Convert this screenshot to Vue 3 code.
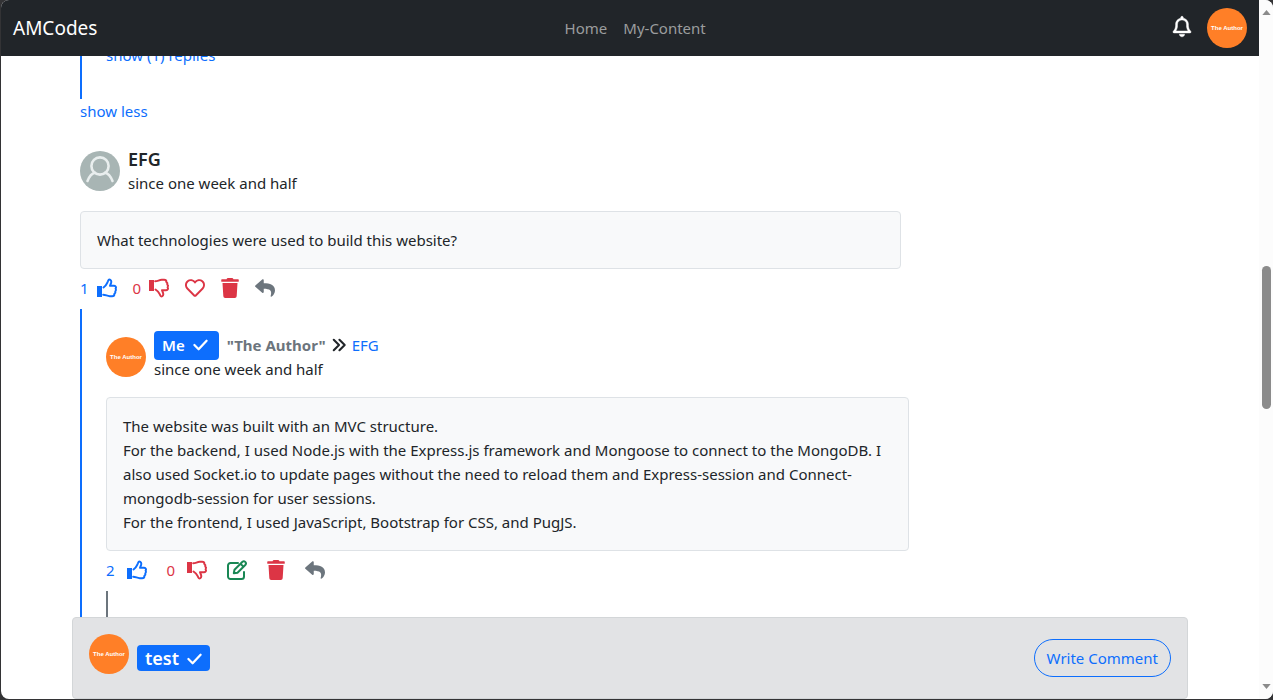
<script setup>
const icons = {
  trash: { box: '0 0 448 512', d: 'M432 32H312l-9.4-18.7A24 24 0 0 0 281.1 0H166.8a23.72 23.72 0 0 0-21.4 13.3L136 32H16A16 16 0 0 0 0 48v32a16 16 0 0 0 16 16h416a16 16 0 0 0 16-16V48a16 16 0 0 0-16-16zM53.2 467a48 48 0 0 0 47.9 45h245.8a48 48 0 0 0 47.9-45L416 128H32z' },
  reply: { box: '0 0 512 512', d: 'M8.309 189.836L184.313 37.851C199.719 24.546 224 35.347 224 56.015v80.053c160.629 1.839 288 34.032 288 186.258 0 61.441-39.581 122.309-83.333 154.132-13.653 9.931-33.111-2.533-28.077-18.631 45.344-145.012-21.507-183.51-176.59-185.742V360c0 20.7-24.3 31.453-39.687 18.164l-176.004-152c-11.071-9.562-11.086-26.753 0-36.328z' },
  heart: { box: '0 0 512 512', d: 'M458.4 64.3C400.6 15.7 311.3 23 256 79.3 200.7 23 111.4 15.6 53.6 64.3-21.6 127.6-10.6 230.8 43 285.5l175.4 178.7c10 10.2 23.4 15.9 37.6 15.9 14.3 0 27.6-5.6 37.6-15.8L469 285.6c53.5-54.7 64.7-157.9-10.6-221.3zm-23.6 187.5L259.4 430.5c-2.4 2.4-4.4 2.4-6.8 0L77.2 251.8c-36.5-37.2-43.9-107.6 7.3-150.7 38.9-32.7 98.9-27.8 136.5 10.5l35 35.7 35-35.7c37.8-38.5 97.8-43.2 136.5-10.6 51.1 43.1 43.5 113.9 7.3 150.8z' },
}

const comments = [
  {
    id: 1,
    text: ['What technologies were used to build this website?'],
    likes: 1,
    dislikes: 0,
    tools: [
      { name: 'heart', label: 'Love', tone: 'red' },
      { name: 'trash', label: 'Delete', tone: 'red' },
      { name: 'reply', label: 'Reply', tone: 'gray' },
    ],
  },
  {
    id: 2,
    mine: true,
    text: [
      'The website was built with an MVC structure.',
      'For the backend, I used Node.js with the Express.js framework and Mongoose to connect to the MongoDB. I also used Socket.io to update pages without the need to reload them and Express-session and Connect-mongodb-session for user sessions.',
      'For the frontend, I used JavaScript, Bootstrap for CSS, and PugJS.',
    ],
    likes: 2,
    dislikes: 0,
    tools: [
      { name: 'edit', label: 'Edit', tone: 'green' },
      { name: 'trash', label: 'Delete', tone: 'red' },
      { name: 'reply', label: 'Reply', tone: 'gray' },
    ],
  },
]
</script>

<template>
  <div class="window">
    <div class="page">
      <nav class="navbar">
        <a class="brand" href="#">AMCodes</a>
        <div class="links">
          <a href="#">Home</a>
          <a href="#">My-Content</a>
        </div>
        <div class="account">
          <button class="bell" aria-label="Notifications">
            <svg viewBox="0 0 448 512"><path d="M224 0c-17.7 0-32 14.3-32 32V49.9C119.5 61.4 64 124.2 64 200v33.4c0 45.4-15.5 89.5-43.8 124.9L5.3 377c-5.8 7.2-6.9 17.1-2.9 25.4S14.8 416 24 416H424c9.2 0 17.6-5.3 21.6-13.6s2.9-18.2-2.9-25.4l-14.9-18.6C399.5 322.9 384 278.8 384 233.4V200c0-75.8-55.5-138.6-128-150.1V32c0-17.7-14.3-32-32-32zm0 96h8c57.4 0 104 46.6 104 104v33.4c0 47.9 13.9 94.6 39.7 134.6H72.3C98.1 328 112 281.3 112 233.4V200c0-57.4 46.6-104 104-104h8zm64 352H224 160c0 17 6.7 33.3 18.7 45.3s28.3 18.7 45.3 18.7s33.3-6.7 45.3-18.7s18.7-28.3 18.7-45.3z" /></svg>
          </button>
          <button class="avatar" aria-label="Account menu">The Author</button>
        </div>
      </nav>

      <main class="feed">
        <div class="column">
          <div class="thread earlier">
            <a href="#">show (1) replies</a>
          </div>
          <a class="less" href="#">show less</a>

          <template v-for="c in comments" :key="c.id">
            <article class="comment" :class="{ nested: c.mine }">
              <header class="author">
                <span v-if="c.mine" class="avatar">The Author</span>
                <svg v-else class="person" viewBox="0 0 40 40">
                  <circle cx="20" cy="20" r="20" fill="#a8b5b4" />
                  <g fill="none" stroke="#e9eeee" stroke-width="2.6" stroke-linecap="round">
                    <circle cx="20" cy="15" r="8.6" />
                    <path d="M7.500 30C9.500 25 12 22.500 15 21.800M25 21.800C28 22.500 30.500 25 32.500 30" />
                  </g>
                </svg>
                <div>
                  <div v-if="c.mine" class="who">
                    <span class="badge">Me
                      <svg viewBox="0 0 16 16"><path class="tick" d="M1.500 8.500 6 13 14.500 4" /></svg>
                    </span>
                    <strong>"The Author"</strong>
                    <svg class="chevrons" viewBox="0 0 16 16"><path d="M2 2 8 8 2 14M8.500 2 14.500 8 8.500 14" /></svg>
                    <a href="#">EFG</a>
                  </div>
                  <h2 v-else>EFG</h2>
                  <div class="since">since one week and half</div>
                </div>
              </header>
              <div class="bubble">
                <p v-for="line in c.text" :key="line">{{ line }}</p>
              </div>
              <div class="actions">
                <span class="vote blue">
                  {{ c.likes }}
                  <button aria-label="Like">
                    <svg viewBox="0 0 20 20">
                      <path d="M0 8h5v11H0z" />
                      <path class="line" d="M6.500 9.500C9.500 7.500 9.800 5.500 10.800 3.600c.5-1.200.6-2 1.500-2 1.700 0 2.300 1.800 1.800 3.300L13 7.800h4.200c1.700 0 2.300 1.700 1.400 2.800.6 1 .5 2.100-.3 2.800.3 1-.1 2-.9 2.500 0 1.500-.6 2.300-2.300 2.300h-2.300c-2.700 0-4-1.500-6.600-1.500" />
                    </svg>
                  </button>
                </span>
                <span class="vote red">
                  {{ c.dislikes }}
                  <button aria-label="Dislike">
                    <svg viewBox="0 0 20 20">
                      <path d="M0 2h5v11H0z" />
                      <path class="line" d="M6.500 11.500c3 2 3.300 3 4.300 4.900.5 1.200.6 2 1.500 2 1.700 0 2.300-1.800 1.800-3.300L13 12.200h4.200c1.700 0 2.300-1.700 1.400-2.800.6-1 .5-2.100-.3-2.800.3-1-.1-2-.9-2.500 0-1.500-.6-2.300-2.300-2.300h-2.300c-2.700 0-4 1.500-6.600 1.500" />
                    </svg>
                  </button>
                </span>
                <button v-for="t in c.tools" :key="t.name" :class="[t.tone, t.name]" :aria-label="t.label">
                  <svg v-if="t.name === 'edit'" viewBox="0 0 20 20">
                    <path class="line" d="M11 3H3.500A2.500 2.500 0 0 0 1 5.500v11A2.500 2.500 0 0 0 3.500 19h11a2.500 2.500 0 0 0 2.500-2.500V12" />
                    <path class="line" d="M6.800 13.200l.7-3.500 8-8c1.800-1.500 4.500 1 3 3l-8 8zM13.500 3.800l2.800 2.800" />
                  </svg>
                  <svg v-else :viewBox="icons[t.name].box"><path :d="icons[t.name].d" /></svg>
                </button>
              </div>
              <div v-if="c.mine" class="deeper"></div>
            </article>
          </template>
        </div>
      </main>

      <footer class="composer">
        <span class="avatar">The Author</span>
        <span class="badge">test
          <svg viewBox="0 0 16 16"><path class="tick" d="M1.500 8.500 6 13 14.500 4" /></svg>
        </span>
        <button class="write">Write Comment</button>
      </footer>
    </div>

    <div class="scrollbar" aria-hidden="true">
      <svg viewBox="0 0 10 6"><path d="M0 6 5 0l5 6z" /></svg>
      <span class="before"></span>
      <span class="thumb"></span>
      <span class="after"></span>
      <svg viewBox="0 0 10 6"><path d="M0 0h10L5 6z" /></svg>
    </div>
  </div>
</template>

<style>
html,
body {
  margin: 0;
  background: #333335;
}
</style>

<style scoped>
* {
  box-sizing: border-box;
}
.window {
  display: flex;
  height: calc(100vh - 1px);
  margin: 0 0 1px 1px;
  overflow: hidden;
  border-radius: 8px;
  background: #fff;
  color: #212529;
  font: 15px/24px "Noto Sans", "Open Sans", sans-serif;
}
a {
  color: #0d6efd;
  text-decoration: none;
}
button {
  padding: 0;
  border: 0;
  background: none;
  color: inherit;
  font: inherit;
  cursor: pointer;
}
svg {
  display: block;
  fill: currentColor;
  overflow: visible;
}
.page {
  display: flex;
  flex: 1;
  flex-direction: column;
  min-width: 0;
}
.navbar {
  display: flex;
  flex: none;
  align-items: center;
  justify-content: space-between;
  height: 56px;
  padding: 0 12px;
  background: #212529;
}
.brand {
  color: #fff;
  font-size: 19px;
}
.links {
  display: flex;
  gap: 16px;
}
.links a {
  color: #9b9d9e;
}
.account {
  display: flex;
  align-items: center;
  gap: 16px;
  color: #fff;
}
.bell svg {
  width: 18px;
  height: 21px;
  margin-bottom: 3px;
  stroke: currentColor;
  stroke-width: 12;
}
.avatar {
  display: flex;
  flex: none;
  align-items: center;
  justify-content: center;
  width: 40px;
  height: 40px;
  border-radius: 50%;
  background: #ff7f27;
  color: #fff;
  font: bold 6px/8px "Liberation Sans", Arial, sans-serif;
  white-space: nowrap;
}
.feed {
  flex: 1;
  min-height: 0;
  overflow: hidden;
}
.column {
  max-width: 1116px;
  margin: -13px auto 0;
  padding: 0 8px;
}
.thread {
  padding-left: 24px;
  border-left: 2px solid #0d6efd;
}
.earlier {
  height: 56px;
}
.less {
  display: block;
}
.comment {
  padding-top: 24px;
}
.nested {
  padding-left: 24px;
  border-left: 2px solid #0d6efd;
}
.author {
  display: flex;
  align-items: center;
  gap: 8px;
  margin-bottom: 16px;
}
.person {
  width: 40px;
  height: 40px;
}
h2 {
  margin: 0;
  font-size: 18px;
  font-weight: 600;
  line-height: 24px;
}
.who {
  display: flex;
  align-items: center;
  height: 24px;
}
.who strong {
  margin: 0 6px 0 8px;
  color: #6c757d;
}
.chevrons {
  width: 14px;
  height: 14px;
  margin-right: 6px;
}
.chevrons path,
.tick {
  fill: none;
  stroke: currentColor;
  stroke-width: 2.4;
  stroke-linecap: round;
  stroke-linejoin: round;
}
.badge {
  display: flex;
  align-items: center;
  gap: 8px;
  padding: 2px 11px 3px 8px;
  border-radius: 4px;
  background: #0d6efd;
  color: #fff;
  font-weight: 600;
}
.badge svg {
  width: 15px;
  height: 15px;
}
.bubble {
  width: calc(75% - 4px);
  padding: 16px;
  border: 1px solid #dee2e6;
  border-radius: 4px;
  background: #f8f9fa;
}
.nested .bubble {
  width: calc(75% - 3px);
}
p {
  margin: 0;
}
.actions {
  display: flex;
  align-items: center;
  gap: 16px;
  height: 40px;
  padding-bottom: 2px;
}
.vote {
  display: flex;
  align-items: center;
  gap: 8px;
}
.nested .actions {
  gap: 20px;
}
.nested .vote {
  gap: 12px;
}
.actions svg {
  width: 20px;
  height: 20px;
}
.actions .trash svg {
  width: 18px;
}
.line {
  fill: none;
  stroke: currentColor;
  stroke-width: 2;
  stroke-linejoin: round;
  stroke-linecap: round;
}
.blue {
  color: #0d6efd;
}
.red {
  color: #dc3545;
}
.green {
  color: #198754;
}
.gray {
  color: #6c757d;
}
.deeper {
  height: 80px;
  border-left: 2px solid #6c757d;
}
.composer {
  display: flex;
  flex: none;
  align-items: center;
  gap: 8px;
  width: calc(100% - 24px);
  max-width: 1116px;
  margin: 0 auto;
  padding: 16px;
  border: 1px solid #d3d6d8;
  border-radius: 4px;
  background: #e2e3e5;
}
.composer .avatar {
  margin-bottom: 8px;
}
.composer .badge {
  padding: 1px 8px;
  font-size: 18px;
}
.write {
  height: 38px;
  margin-left: auto;
  padding: 0 12px;
  border: 1px solid #0d6efd;
  border-radius: 19px;
  color: #0d6efd;
}
.scrollbar {
  display: flex;
  flex: none;
  flex-direction: column;
  align-items: center;
  width: 14px;
  padding: 10px 0;
  background: #fcfcfc;
  color: #8b8b8b;
}
.scrollbar svg {
  width: 9px;
  height: 5px;
}
.before {
  flex: 251;
}
.thumb {
  flex: 142;
  width: 9px;
  border-radius: 5px;
  background: #8b8b8b;
}
.after {
  flex: 275;
}
</style>
